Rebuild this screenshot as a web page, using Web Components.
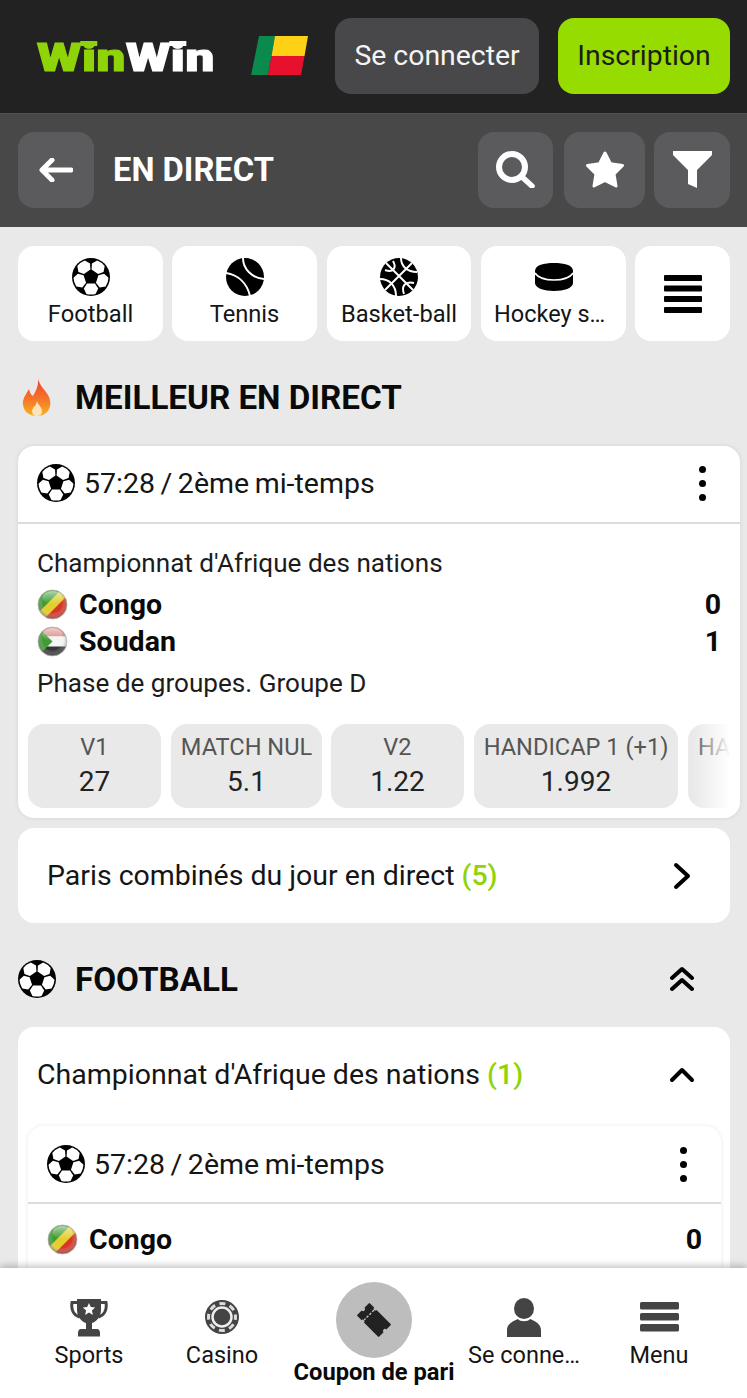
<!DOCTYPE html>
<html lang="fr">
<head>
<meta charset="utf-8">
<title>WinWin - En direct</title>
<style>
html, body { margin:0; height:100%; }
body {
	display:flex;
	flex-direction:column;
	height:100vh;
	overflow:hidden;
	background:#e9e9e9;
	color:#111;
	font-family:Roboto,"Liberation Sans",sans-serif;
}
</style>
</head>
<body>
<site-header></site-header>
<live-bar></live-bar>
<page-content>
	<sport-tabs>
		<sport-tab icon="ball" style="width:145px">Football</sport-tab>
		<sport-tab icon="tennis" style="width:145px;margin-left:9px">Tennis</sport-tab>
		<sport-tab icon="basket" style="width:144px;margin-left:10px">Basket-ball</sport-tab>
		<sport-tab icon="puck" style="width:145px;margin-left:10px">Hockey s…</sport-tab>
		<sport-tab icon="bars" style="width:95px;margin-left:9px"></sport-tab>
	</sport-tabs>
	<section-heading icon="flame" style="height:98px;padding-top:7px">MEILLEUR EN DIRECT</section-heading>
	<match-card style="margin:0 7px 0 18px">
		<match-head style="padding-bottom:2px">57:28 / 2ème mi-temps</match-head>
		<match-line style="padding-top:20px">Championnat d'Afrique des nations</match-line>
		<team-row flag="congo" score="0" style="margin-top:4px">Congo</team-row>
		<team-row flag="soudan" score="1">Soudan</team-row>
		<match-line style="margin-top:4px">Phase de groupes. Groupe D</match-line>
		<odds-row>
			<odd-chip label="V1" value="27" style="width:133px"></odd-chip>
			<odd-chip label="MATCH NUL" value="5.1" style="width:151px"></odd-chip>
			<odd-chip label="V2" value="1.22" style="width:133px;margin-left:-1px"></odd-chip>
			<odd-chip label="HANDICAP 1 (+1)" value="1.992" style="width:204px"></odd-chip>
			<odd-chip label="HA" class="cut"></odd-chip>
		</odds-row>
	</match-card>
	<combo-row count="(5)">Paris combinés du jour en direct</combo-row>
	<section-heading icon="ball" action="collapse">FOOTBALL</section-heading>
	<league-card count="(1)" title="Championnat d'Afrique des nations">
		<match-card style="margin:0 9px 0 10px;padding-bottom:60px">
			<match-head>57:28 / 2ème mi-temps</match-head>
			<team-row flag="congo" score="0" style="margin-top:17px">Congo</team-row>
		</match-card>
	</league-card>
</page-content>
<bottom-nav>
	<nav-item icon="trophy" style="width:132px">Sports</nav-item>
	<nav-item icon="chip" style="width:134px">Casino</nav-item>
	<nav-item icon="ticket" style="width:170px" active>Coupon de pari</nav-item>
	<nav-item icon="person" style="width:130px">Se conne…</nav-item>
	<nav-item icon="menu" style="width:140px">Menu</nav-item>
</bottom-nav>

<script>
const ballPatch = 'M15 25.5h8l3.2 5-2.6 5.4a17.4 17.4 0 0 1-9.2 0l-2.6-5.4z';
const ICONS = {
	ball: `<svg width="38" height="38" viewBox="0 0 38 38"><circle cx="19" cy="19" r="19" fill="#000"/>
		<g fill="#fff">${[0, 72, 144, 216, 288].map(a => `<path d="${ballPatch}" transform="rotate(${a} 19 19)"/>`).join('')}</g></svg>`,
	tennis: `<svg width="38" height="38" viewBox="0 0 38 38"><circle cx="19" cy="19" r="19" fill="#000"/>
		<path d="M17 0C17 11 26 20 38 21M0 15C12 17 21 25 24 38" fill="none" stroke="#fff" stroke-width="2"/></svg>`,
	basket: `<svg width="38" height="38" viewBox="0 0 38 38"><circle cx="19" cy="19" r="19" fill="#000"/>
		<g fill="none" stroke="#fff" stroke-width="2"><path d="M6 5L33 32M32 5L5 32M21 0C21 8 27 14 37 14M0 21C9 21 16 27 16 38M13 3C17 10 13 15 5 12M24 36C21 28 25 23 34 25"/></g></svg>`,
	puck: `<svg width="38" height="38" viewBox="0 0 38 38"><path d="M0 13C0 7 9 5 19 5S38 7 38 13V25C38 30 29 33 19 33S0 30 0 25Z" fill="#000"/>
		<path d="M0 15C3 20 11 22 19 22S35 20 38 15" fill="none" stroke="#fff" stroke-width="1.6"/></svg>`,
	bars: `<svg width="38" height="38" viewBox="0 0 38 38"><g fill="#000"><rect y="0" width="38" height="6" rx="1"/><rect y="10.500" width="38" height="6" rx="1"/><rect y="21" width="38" height="6" rx="1"/><rect y="32" width="38" height="6" rx="1"/></g></svg>`,
	flame: `<svg width="30" height="38" viewBox="0 0 30 38"><defs><linearGradient id="fl" x1="0" y1="0" x2="0" y2="1"><stop offset="0" stop-color="#ee3f2a"/><stop offset=".55" stop-color="#f5752a"/><stop offset="1" stop-color="#fbb120"/></linearGradient></defs>
		<path d="M16 0C17 8 24 12 27 19C31 28 26 38 15 38C5 38 0 31 1 23C2 18 5 15 7 11C8 15 9 17 11 18C14 13 17 7 16 0Z" fill="url(#fl)"/>
		<path d="M15 23C16 27 20 29 20 33C20 36 18 38 15 38C12 38 10 36 10 33C10 31 12 30 12 28C13 29 14 27 15 23Z" fill="#fde3bb"/></svg>`,
	trophy: `<svg width="38" height="39" viewBox="0 0 38 39"><path d="M7 1H31V12C31 19 26 24 22 25V31H27C29 31 30 33 30 35V38.500H8V35C8 33 9 31 11 31H16V25C12 24 7 19 7 12Z" fill="#444"/>
		<path d="M7 4.500H2C1 11 3 17 9.500 19M31 4.500H36C37 11 35 17 28.500 19" fill="none" stroke="#444" stroke-width="3"/>
		<path d="M19 5l1.800 4.100 4.400.4-3.300 3 1 4.400-3.900-2.300-3.900 2.300 1-4.400-3.300-3 4.400-.4z" fill="#fff"/></svg>`,
	chip: `<svg width="34" height="34" viewBox="0 0 34 34"><circle cx="17" cy="17" r="17" fill="#444"/>
		<circle cx="17" cy="17" r="13.500" fill="none" stroke="#ddd" stroke-width="3" stroke-dasharray="6 4.600" stroke-dashoffset="3"/>
		<circle cx="17" cy="17" r="9.500" fill="none" stroke="#eee" stroke-width="2.500"/><circle cx="17" cy="17" r="7" fill="#444"/></svg>`,
	ticket: `<svg width="40" height="40" viewBox="0 0 40 40"><g transform="rotate(45 20 20)">
		<rect x="4.500" y="11" width="31" height="18" rx="1" fill="#222"/>
		<circle cx="13" cy="11" r="1.800" fill="#bdbdbd"/><circle cx="13" cy="29" r="1.800" fill="#bdbdbd"/>
		<circle cx="4.500" cy="20" r="2" fill="#bdbdbd"/><circle cx="35.500" cy="20" r="2" fill="#bdbdbd"/>
		<path d="M13 13V27" stroke="#bdbdbd" stroke-width="1.400" stroke-dasharray="2.500 1.500"/></g></svg>`,
	person: `<svg width="34" height="39" viewBox="0 0 34 39"><ellipse cx="17" cy="10.500" rx="10" ry="10.500" fill="#444"/><path d="M0 39V32C0 26 6 23 11 21C13 24 21 24 23 21C28 23 34 26 34 32V39Z" fill="#444"/></svg>`,
	menu: `<svg width="39" height="30" viewBox="0 0 39 30"><g fill="#444"><rect y="0" width="39" height="7.500" rx="1.500"/><rect y="11" width="39" height="7.500" rx="1.500"/><rect y="22" width="39" height="7.500" rx="1.500"/></g></svg>`
};

class SiteHeader extends HTMLElement {
	constructor() {
		super();
		this.attachShadow({mode: 'open'}).innerHTML = `
		<style>
		:host { display:flex; align-items:center; flex:none; height:113px; background:#222; padding:0 17px 2px 37px; box-sizing:border-box; }
		.logo { width:176px; margin-top:5px; font-size:39px; font-weight:900; letter-spacing:.4px; white-space:nowrap; -webkit-text-stroke:1.2px currentColor; transform:scaleX(1.31); transform-origin:left center; color:#fff; line-height:40px; }
		.logo b { color:#8fd408; font-weight:900; }
		.logo span { position:relative; }
		.logo span::before { content:""; position:absolute; left:-1px; right:-1px; top:6px; height:5px; background:currentColor; }
		svg { margin-left:38px; flex:none; }
		.btn { display:flex; align-items:center; justify-content:center; height:76px; border-radius:16px; font-size:28.400px; box-sizing:border-box; }
		.login { width:204px; margin-left:27px; background:#48484a; color:#f4f4f4; }
		.join { width:172px; margin-left:19px; background:#97dc00; color:#1c1c1c; }
		</style>
		<div class="logo"><b>W<span>i</span>n</b>W<span>i</span>n</div>
		<svg width="57" height="39" viewBox="0 0 57 39">
			<path d="M8 0H24L17 39H1Q0 39 .3 38Z" fill="#0a8a4d"/>
			<path d="M24 0H57L53.500 20H20.500Z" fill="#fcd116"/>
			<path d="M20.500 20H53.500L50 39H17Z" fill="#e8112d"/>
		</svg>
		<div class="btn login">Se connecter</div>
		<div class="btn join">Inscription</div>`;
	}
}

class LiveBar extends HTMLElement {
	constructor() {
		super();
		this.attachShadow({mode: 'open'}).innerHTML = `
		<style>
		:host { display:flex; align-items:center; flex:none; height:114px; background:#484849; border-top:1px solid #525253; padding:0 17px 2px 18px; box-sizing:border-box; }
		.btn { display:flex; align-items:center; justify-content:center; height:76px; background:#5b5b5d; border-radius:16px; flex:none; }
		h1 { flex:1; margin:0 0 0 19px; color:#fff; font-size:32.700px; font-weight:700; }
		</style>
		<div class="btn" style="width:76px">
			<svg width="34" height="24" viewBox="0 0 34 24"><path d="M13 2L3 12L13 22M4 12H32" fill="none" stroke="#fff" stroke-width="5" stroke-linecap="round" stroke-linejoin="round"/></svg>
		</div>
		<h1>EN DIRECT</h1>
		<div class="btn" style="width:75px">
			<svg width="39" height="37" viewBox="0 0 39 37"><circle cx="16" cy="16" r="13" fill="none" stroke="#fff" stroke-width="6"/><path d="M25.500 25.500L36 35" stroke="#fff" stroke-width="5.500" stroke-linecap="round"/></svg>
		</div>
		<div class="btn" style="width:81px;margin-left:11px">
			<svg width="40" height="37" viewBox="0 0 40 37"><path d="M20 2L25.500 12.800L37.500 14.500L29 23L31 35L20 29.300L9 35L11 23L2.500 14.500L14.500 12.800Z" fill="#fff" stroke="#fff" stroke-width="3" stroke-linejoin="round"/></svg>
		</div>
		<div class="btn" style="width:76px;margin-left:9px">
			<svg width="39" height="37" viewBox="0 0 39 37"><path d="M0 0H39V4L24 19V37L15 33V19L0 4Z" fill="#fff"/></svg>
		</div>`;
	}
}

class PageContent extends HTMLElement {
	constructor() {
		super();
		this.attachShadow({mode: 'open'}).innerHTML = `
		<style>:host { display:block; flex:1; min-height:0; overflow:hidden; }</style>
		<slot></slot>`;
	}
}

class SportTabs extends HTMLElement {
	constructor() {
		super();
		this.attachShadow({mode: 'open'}).innerHTML = `
		<style>:host { display:flex; padding:19px 17px 0 18px; }</style>
		<slot></slot>`;
	}
}

class SportTab extends HTMLElement {
	constructor() {
		super();
		const root = this.attachShadow({mode: 'open'});
		const icon = this.getAttribute('icon');
		root.innerHTML = `
		<style>
		:host { display:flex; flex-direction:column; align-items:center; flex:none; height:95px; background:#fff; border-radius:16px; box-sizing:border-box; padding-top:12px; }
		svg { display:block; }
		.label { font-size:23.700px; line-height:28px; margin-top:4px; color:#151515; white-space:nowrap; }
		:host([icon="bars"]) { padding-top:29px; }
		:host([icon="puck"]) .label { align-self:flex-start; margin-left:13px; font-size:23.500px; }
		</style>
		${ICONS[icon]}
		<div class="label"><slot></slot></div>`;
	}
}

class SectionHeading extends HTMLElement {
	constructor() {
		super();
		const root = this.attachShadow({mode: 'open'});
		const flame = this.getAttribute('icon') === 'flame';
		const collapse = this.hasAttribute('action') ? `
		<svg class="act" width="24" height="26" viewBox="0 0 24 26"><path d="M2 12L12 3L22 12M2 23L12 14L22 23" fill="none" stroke="#000" stroke-width="4" stroke-linecap="round" stroke-linejoin="round"/></svg>` : '';
		root.innerHTML = `
		<style>
		:host { display:flex; align-items:center; height:96px; padding:8px 53px 0 18px; }
		.ico { display:flex; width:58px; flex:none; ${flame ? 'padding-left:4px;width:54px;' : ''} }
		.txt { flex:1; margin-left:-1px; font-size:33.200px; font-weight:700; color:#0a0a0a; }
		.act { flex:none; }
		</style>
		<div class="ico">${ICONS[this.getAttribute('icon')]}</div>
		<div class="txt"><slot></slot></div>${collapse}`;
	}
}

class MatchCard extends HTMLElement {
	constructor() {
		super();
		this.attachShadow({mode: 'open'}).innerHTML = `
		<style>
		:host { display:block; background:#fff; border-radius:16px; box-shadow:0 0 5px rgba(0,0,0,.09); overflow:hidden; padding-bottom:10px; }
		</style>
		<slot></slot>`;
	}
}

class MatchHead extends HTMLElement {
	constructor() {
		super();
		this.attachShadow({mode: 'open'}).innerHTML = `
		<style>
		:host { display:flex; align-items:center; height:78px; box-sizing:border-box; border-bottom:2px solid #dcdcdc; padding:0 34px 0 19px; }
		.time { flex:1; margin-left:9px; font-size:28.500px; word-spacing:-1.500px; color:#151515; white-space:nowrap; }
		.dots { display:flex; flex-direction:column; gap:7px; }
		.dots i { display:block; width:7px; height:7px; border-radius:50%; background:#000; }
		</style>
		${ICONS.ball}
		<div class="time"><slot></slot></div>
		<div class="dots"><i></i><i></i><i></i></div>`;
	}
}

class MatchLine extends HTMLElement {
	constructor() {
		super();
		this.attachShadow({mode: 'open'}).innerHTML = `
		<style>:host { display:block; padding:0 19px; font-size:26.100px; line-height:38px; color:#1c1c1c; white-space:nowrap; }</style>
		<slot></slot>`;
	}
}

class TeamRow extends HTMLElement {
	constructor() {
		super();
		const root = this.attachShadow({mode: 'open'});
		const congo = `
			<rect width="30" height="30" fill="#e2cf2e"/>
			<path d="M0 0H24L0 24Z" fill="#3f9c35"/>
			<path d="M30 6V30H6Z" fill="#d9362a"/>`;
		const soudan = `
			<rect width="30" height="10" fill="#d98880"/>
			<rect y="10" width="30" height="10" fill="#f4f4f4"/>
			<rect y="20" width="30" height="10" fill="#333"/>
			<path d="M0 0L15 15L0 30Z" fill="#3f9c35"/>`;
		const id = this.getAttribute('flag');
		root.innerHTML = `
		<style>
		:host { display:flex; align-items:center; height:37px; padding:0 19px; font-size:28.500px; font-weight:700; color:#0a0a0a; }
		svg { flex:none; margin-right:11px; filter:blur(.5px); }
		.name { flex:1; }
		</style>
		<svg width="31" height="31" viewBox="0 0 31 31">
			<defs>
				<clipPath id="c"><circle cx="15" cy="15" r="14.500"/></clipPath>
				<radialGradient id="g" cx=".5" cy=".45" r=".55"><stop offset=".6" stop-color="#fff" stop-opacity="0"/><stop offset="1" stop-color="#555" stop-opacity=".6"/></radialGradient>
				<linearGradient id="s" x1="0" y1="0" x2="0" y2="1"><stop offset="0" stop-color="#fff" stop-opacity=".55"/><stop offset="1" stop-color="#fff" stop-opacity="0"/></linearGradient>
			</defs>
			<g transform="translate(.5 .5)"><g clip-path="url(#c)">${id === 'congo' ? congo : soudan}</g>
			<circle cx="15" cy="15" r="14.500" fill="url(#g)" stroke="#bbb" stroke-width=".8"/>
			<ellipse cx="15" cy="8" rx="10" ry="6.500" fill="url(#s)"/></g>
		</svg>
		<div class="name"><slot></slot></div>
		<div>${this.getAttribute('score')}</div>`;
	}
}

class OddsRow extends HTMLElement {
	constructor() {
		super();
		this.attachShadow({mode: 'open'}).innerHTML = `
		<style>
		:host { display:flex; gap:10px; position:relative; overflow:hidden; margin-top:22px; padding-left:10px; }
		.fade { position:absolute; top:0; bottom:0; right:0; width:48px; background:linear-gradient(90deg, rgba(255,255,255,0), #fff 80%); }
		</style>
		<slot></slot>
		<div class="fade"></div>`;
	}
}

class OddChip extends HTMLElement {
	constructor() {
		super();
		const value = this.getAttribute('value');
		this.attachShadow({mode: 'open'}).innerHTML = `
		<style>
		:host { display:flex; flex-direction:column; align-items:center; flex:none; min-width:133px; height:84px; padding:6px 10px 0; box-sizing:border-box; background:#e9e9e9; border-radius:16px; white-space:nowrap; }
		:host(.cut) { align-items:flex-start; }
		.l { font-size:23.600px; line-height:34px; color:#555; }
		.v { font-size:28px; line-height:34px; margin-top:1px; color:#222; }
		</style>
		<div class="l">${this.getAttribute('label')}</div>
		${value ? `<div class="v">${value}</div>` : ''}`;
	}
}

class ComboRow extends HTMLElement {
	constructor() {
		super();
		this.attachShadow({mode: 'open'}).innerHTML = `
		<style>
		:host { display:flex; align-items:center; height:95px; margin:10px 17px 0 18px; padding:0 39px 0 29px; background:#fff; border-radius:16px; font-size:28.500px; color:#151515; }
		.txt { flex:1; white-space:nowrap; }
		b { color:#8fd408; font-weight:500; }
		</style>
		<div class="txt"><slot></slot> <b>${this.getAttribute('count')}</b></div>
		<svg width="18" height="28" viewBox="0 0 18 28"><path d="M3 3L15 14L3 25" fill="none" stroke="#000" stroke-width="4" stroke-linecap="round" stroke-linejoin="round"/></svg>`;
	}
}

class LeagueCard extends HTMLElement {
	constructor() {
		super();
		this.attachShadow({mode: 'open'}).innerHTML = `
		<style>
		:host { display:block; margin:0 17px 0 18px; background:#fff; border-radius:16px 16px 0 0; }
		.top { display:flex; align-items:center; height:95px; padding:0 35px 4px 19px; font-size:28.500px; color:#151515; }
		.txt { flex:1; white-space:nowrap; }
		b { color:#8fd408; font-weight:500; }
		</style>
		<div class="top">
			<div class="txt">${this.getAttribute('title')} <b>${this.getAttribute('count')}</b></div>
			<svg width="26" height="16" viewBox="0 0 26 16"><path d="M3 13L13 3L23 13" fill="none" stroke="#000" stroke-width="4" stroke-linecap="round" stroke-linejoin="round"/></svg>
		</div>
		<slot></slot>`;
	}
}

class BottomNav extends HTMLElement {
	constructor() {
		super();
		this.attachShadow({mode: 'open'}).innerHTML = `
		<style>
		:host { display:flex; flex:none; position:relative; height:130px; padding-left:23px; box-sizing:border-box; background:#fff; box-shadow:0 -2px 7px rgba(0,0,0,.25); }
		</style>
		<slot></slot>`;
	}
}

class NavItem extends HTMLElement {
	constructor() {
		super();
		this.attachShadow({mode: 'open'}).innerHTML = `
		<style>
		:host { display:flex; flex-direction:column; align-items:center; flex:none; box-sizing:border-box; }
		.ico { display:flex; align-items:center; justify-content:center; height:40px; margin-top:29px; }
		.label { margin-top:4px; font-size:23.500px; line-height:28px; color:#151515; white-space:nowrap; }
		:host([active]) .ico { width:76px; height:76px; margin-top:14px; border-radius:50%; background:#bdbdbd; }
		:host([active]) .label { margin-top:0; font-size:23.700px; font-weight:700; color:#0a0a0a; }
		</style>
		<div class="ico">${ICONS[this.getAttribute('icon')]}</div>
		<div class="label"><slot></slot></div>`;
	}
}

const elements = {
	'site-header': SiteHeader, 'live-bar': LiveBar, 'page-content': PageContent,
	'sport-tabs': SportTabs, 'sport-tab': SportTab, 'section-heading': SectionHeading,
	'match-card': MatchCard, 'match-head': MatchHead, 'match-line': MatchLine,
	'team-row': TeamRow, 'odds-row': OddsRow, 'odd-chip': OddChip, 'combo-row': ComboRow,
	'league-card': LeagueCard, 'bottom-nav': BottomNav, 'nav-item': NavItem
};
for (const name in elements) {
	customElements.define(name, elements[name]);
}
</script>
</body>
</html>
